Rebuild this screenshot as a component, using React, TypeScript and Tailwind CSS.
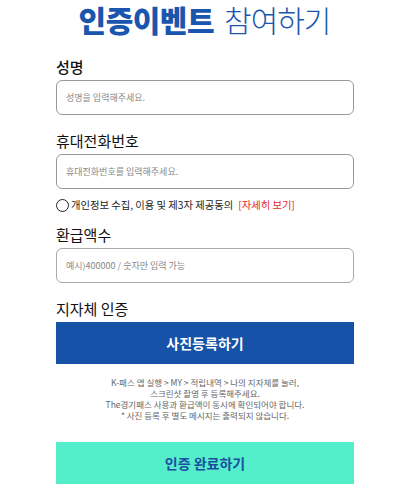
export default function App() {
  const font = { fontFamily: '"Noto Sans CJK KR", "Noto Sans", sans-serif' };
  return (
    <div className="w-[400px] h-[494px] bg-white overflow-hidden" style={font}>
      <h1 className="text-center pl-[9px] text-[30px] leading-[38px] tracking-[-0.5px] text-[#1a56ad]">
        <span className="font-black">인증이벤트</span>
        <span className="font-light ml-[10px] tracking-[-1px]">참여하기</span>
      </h1>
      <div className="w-[298px] ml-[56px] flex flex-col">
        <label className="mt-[18px] text-[15px] leading-[22px] font-medium text-[#111]">성명</label>
        <div className="mt-[2px] h-[35px] border border-[#999] rounded-[6px] flex items-center px-[9px] text-[9px] text-[#888]">
          성명을 입력해주세요.
        </div>
        <label className="mt-[15px] text-[15px] leading-[22px] font-normal text-[#111]">휴대전화번호</label>
        <div className="mt-[2px] h-[35px] border border-[#999] rounded-[6px] flex items-center px-[9px] text-[9px] text-[#888]">
          휴대전화번호를 입력해주세요.
        </div>
        <div className="mt-[8px] flex items-center gap-[2px] text-[10.3px] leading-[16px] text-[#222]">
          <span className="w-[13px] h-[13px] rounded-full border border-[#222] inline-block"></span>
          <span>개인정보 수집, 이용 및 제3자 제공동의</span>
          <span className="ml-[3px] text-[#e8242a]">[자세히 보기]</span>
        </div>
        <label className="mt-[11px] text-[15px] leading-[22px] font-normal text-[#111]">환급액수</label>
        <div className="mt-[2px] h-[35px] border border-[#aaa] rounded-[6px] flex items-center px-[9px] text-[9px] text-[#888]">
          예시)400000 / 숫자만 입력 가능
        </div>
        <label className="mt-[15px] text-[15px] leading-[22px] font-normal text-[#111]">지자체 인증</label>
        <div className="mt-[2px] h-[42px] bg-[#1552a8] flex items-center justify-center text-white text-[14px] font-bold">
          사진등록하기
        </div>
        <div className="mt-[13px] text-center text-[8.5px] leading-[11px] text-[#666]">
          <p>K-패스 앱 실행 &gt; MY &gt; 적립내역 &gt; 나의 지자체를 눌러,</p>
          <p>스크린샷 촬영 후 등록해주세요.</p>
          <p>The경기패스 사용과 환급액이 동시에 확인되어야 합니다.</p>
          <p>* 사진 등록 후 별도 메시지는 출력되지 않습니다.</p>
        </div>
        <div className="mt-[21px] h-[42px] bg-[#55eecb] flex items-center justify-center text-[#1a4fa0] text-[14px] font-bold">
          인증 완료하기
        </div>
      </div>
    </div>
  );
}
